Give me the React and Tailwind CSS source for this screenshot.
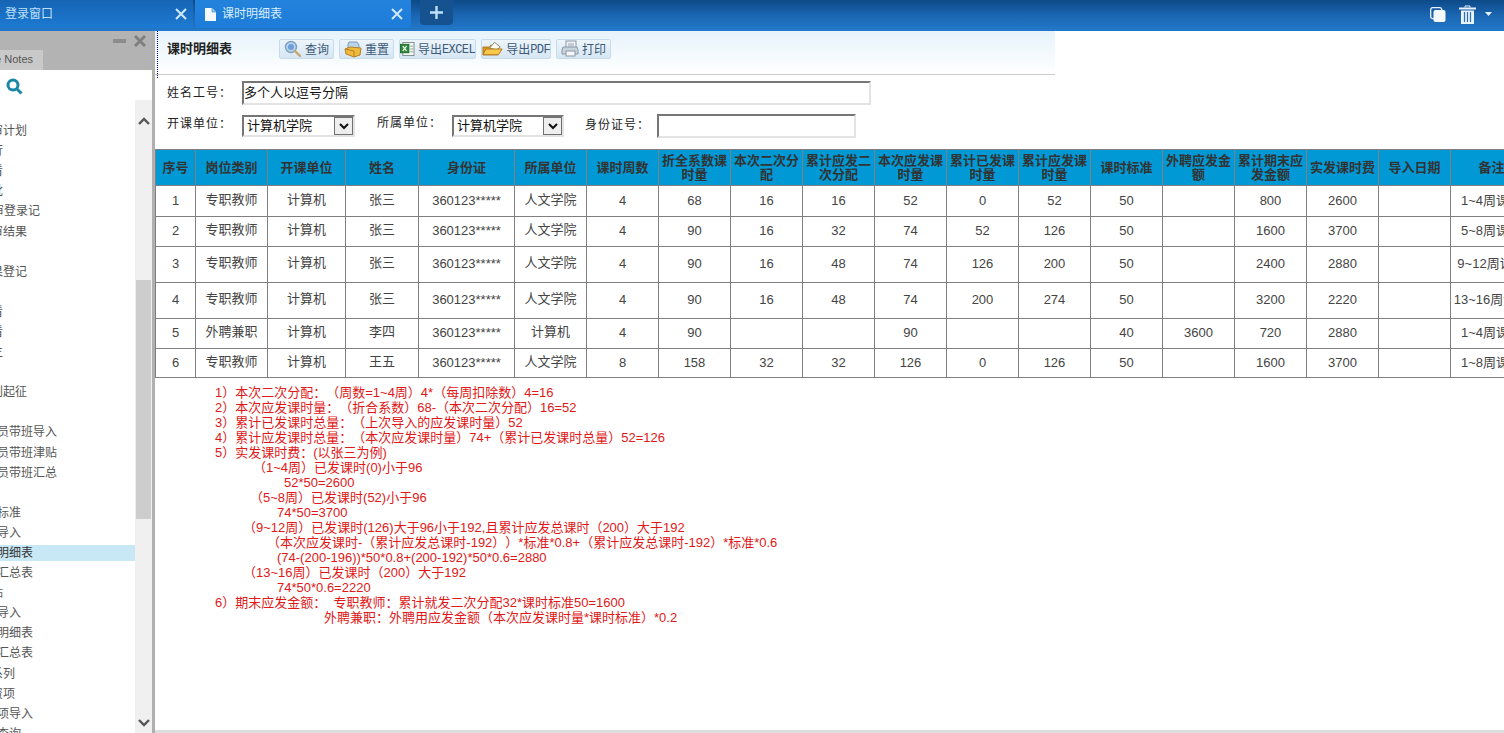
const cjk = "font-['Liberation_Sans','Noto_Sans_CJK_SC',sans-serif]"

const menu = [
  { t: '教学审计划', c: 'ml-[-33px]' },
  { t: '审批行', c: 'ml-[-33px]' },
  { t: '计划查看', c: 'ml-[-45px]' },
  { t: '审核批', c: 'ml-[-33px]' },
  { t: '教学审登录记', c: 'ml-[-32px]' },
  { t: '教学审结果', c: 'ml-[-33px]' },
  { t: '' },
  { t: '教学成果登记', c: 'ml-[-45px]' },
  { t: '' },
  { t: '成果查看', c: 'ml-[-45px]' },
  { t: '统计查看', c: 'ml-[-45px]' },
  { t: '教学主', c: 'ml-[-33px]' },
  { t: '' },
  { t: '教学计划起征', c: 'ml-[-45px]' },
  { t: '' },
  { t: '督导人员带班导入', c: 'ml-[-39px]' },
  { t: '督导人员带班津贴', c: 'ml-[-39px]' },
  { t: '督导人员带班汇总', c: 'ml-[-39px]' },
  { t: '' },
  { t: '课时费标准', c: 'ml-[-39px]' },
  { t: '课时费导入', c: 'ml-[-39px]' },
  { t: '课时费明细表', c: 'ml-[-39px]', active: true },
  { t: '课时费汇总表', c: 'ml-[-39px]' },
  { t: '补津贴', c: 'ml-[-33px]' },
  { t: '津贴费导入', c: 'ml-[-39px]' },
  { t: '津贴费明细表', c: 'ml-[-39px]' },
  { t: '津贴费汇总表', c: 'ml-[-39px]' },
  { t: '工资系列', c: 'ml-[-33px]' },
  { t: '工资项', c: 'ml-[-21px]' },
  { t: '工资项导入', c: 'ml-[-27px]' },
  { t: '工资查询', c: 'ml-[-27px]' },
]

const widths = ['w-[40px]', 'w-[72px]', 'w-[78px]', 'w-[73px]', 'w-[96px]', 'w-[72px]', 'w-[72px]', 'w-[72px]', 'w-[72px]', 'w-[72px]', 'w-[72px]', 'w-[72px]', 'w-[72px]', 'w-[72px]', 'w-[72px]', 'w-[72px]', 'w-[72px]', 'w-[72px]', 'w-[82px]']

const headers = ['序号', '岗位类别', '开课单位', '姓名', '身份证', '所属单位', '课时周数', '折全系数课时量', '本次二次分配', '累计应发二次分配', '本次应发课时量', '累计已发课时量', '累计应发课时量', '课时标准', '外聘应发金额', '累计期末应发金额', '实发课时费', '导入日期', '备注']

const rows = [
  { h: 'h-[31px]', d: ['1', '专职教师', '计算机', '张三', '360123*****', '人文学院', '4', '68', '16', '16', '52', '0', '52', '50', '', '800', '2600', '', '1~4周课时'] },
  { h: 'h-[30px]', d: ['2', '专职教师', '计算机', '张三', '360123*****', '人文学院', '4', '90', '16', '32', '74', '52', '126', '50', '', '1600', '3700', '', '5~8周课时'] },
  { h: 'h-[36px]', d: ['3', '专职教师', '计算机', '张三', '360123*****', '人文学院', '4', '90', '16', '48', '74', '126', '200', '50', '', '2400', '2880', '', '9~12周课时'] },
  { h: 'h-[36px]', d: ['4', '专职教师', '计算机', '张三', '360123*****', '人文学院', '4', '90', '16', '48', '74', '200', '274', '50', '', '3200', '2220', '', '13~16周课时'] },
  { h: 'h-[30px]', d: ['5', '外聘兼职', '计算机', '李四', '360123*****', '计算机', '4', '90', '', '', '90', '', '', '40', '3600', '720', '2880', '', '1~4周课时'] },
  { h: 'h-[29px]', d: ['6', '专职教师', '计算机', '王五', '360123*****', '人文学院', '8', '158', '32', '32', '126', '0', '126', '50', '', '1600', '3700', '', '1~8周课时'] },
]

// columns holding only chinese text sit a pixel higher in the reference
const cjkCols = [1, 2, 3, 5]

const notes = [
  { t: '1）本次二次分配：（周数=1~4周）4*（每周扣除数）4=16', c: 'pl-[60px]' },
  { t: '2）本次应发课时量：（折合系数）68-（本次二次分配）16=52', c: 'pl-[60px]' },
  { t: '3）累计已发课时总量：（上次导入的应发课时量）52', c: 'pl-[60px]' },
  { t: '4）累计应发课时总量：（本次应发课时量）74+（累计已发课时总量）52=126', c: 'pl-[60px]' },
  { t: '5）实发课时费：(以张三为例)', c: 'pl-[60px]' },
  { t: '（1~4周）已发课时(0)小于96', c: 'pl-[98px]' },
  { t: '52*50=2600', c: 'pl-[129px]' },
  { t: '（5~8周）已发课时(52)小于96', c: 'pl-[95px]' },
  { t: '74*50=3700', c: 'pl-[122px]' },
  { t: '（9~12周）已发课时(126)大于96小于192,且累计应发总课时（200）大于192', c: 'pl-[88px]' },
  { t: '（本次应发课时-（累计应发总课时-192））*标准*0.8+（累计应发总课时-192）*标准*0.6', c: 'pl-[112px]' },
  { t: '(74-(200-196))*50*0.8+(200-192)*50*0.6=2880', c: 'pl-[122px]' },
  { t: '（13~16周）已发课时（200）大于192', c: 'pl-[88px]' },
  { t: '74*50*0.6=2220', c: 'pl-[122px]' },
  { t: '6）期末应发金额：  专职教师：累计就发二次分配32*课时标准50=1600', c: 'pl-[60px]' },
  { t: '外聘兼职：外聘用应发金额（本次应发课时量*课时标准）*0.2', c: 'pl-[169px]' },
]

function CloseIcon({ className }) {
  return (
    <svg className={className} width="12" height="12" viewBox="0 0 12 12" fill="none" stroke="#cfe8fb" strokeWidth="2"><path d="M1 1l10 10M11 1L1 11" /></svg>
  )
}

function SearchBtnIcon() {
  return (
    <svg width="18" height="18" viewBox="0 0 18 18">
      <circle cx="7" cy="7" r="5.5" fill="#b8d4ee" stroke="#7f9fc0" strokeWidth="1.4" />
      <circle cx="7" cy="7" r="3" fill="#6f9fd6" />
      <path d="M11 11l5 5" stroke="#c9a56b" strokeWidth="2.4" strokeLinecap="round" />
    </svg>
  )
}

function ResetIcon() {
  return (
    <svg width="18" height="18" viewBox="0 0 18 18">
      <path d="M5 2h8l2 3v4H4V4z" fill="#b9d5ea" stroke="#7d9cb8" />
      <path d="M1 9l5-2 11 1-1 7-6 2-8-3z" fill="#f0b93a" stroke="#b5822a" />
      <path d="M1 9l9 2v6" fill="none" stroke="#b5822a" />
    </svg>
  )
}

function ExcelIcon() {
  return (
    <svg width="16" height="16" viewBox="0 0 16 16">
      <rect x="3" y="1" width="12" height="14" fill="#f4f7f4" stroke="#7d8a8f" />
      <rect x="0.5" y="3" width="9" height="9" fill="#2c8a3c" stroke="#1f6a2c" />
      <path d="M3 5l4 5M7 5l-4 5" stroke="#fff" strokeWidth="1.2" />
      <path d="M11 5h3M11 8h3M11 11h3" stroke="#7aa886" />
    </svg>
  )
}

function PdfIcon() {
  return (
    <svg width="22" height="16" viewBox="0 0 22 16">
      <path d="M1 6h7l1-2h8v10H1z" fill="#e09a22" stroke="#b0771c" />
      <path d="M8 7l5-6 6 5-4 3z" fill="#fdfdf6" stroke="#8a8f70" />
      <path d="M1 14l3-6h17l-4 6z" fill="#f6c94c" stroke="#b0771c" />
    </svg>
  )
}

function PrintIcon() {
  return (
    <svg width="18" height="17" viewBox="0 0 18 17">
      <rect x="5" y="1" width="10" height="7" fill="#f0f3f6" stroke="#8b98a6" />
      <path d="M2 7h14l1 3v4H1v-4z" fill="#c9d3dd" stroke="#8b98a6" />
      <rect x="5" y="11" width="9" height="5" fill="#f5f7f9" stroke="#8b98a6" />
      <path d="M7 4h6M7 6h6" stroke="#9aa6b2" />
    </svg>
  )
}

function ToolBtn({ w, icon, children }) {
  return (
    <button className={`${w} h-[20px] flex items-center justify-center gap-[3px] rounded-[2px] border border-[#c8dbea] bg-gradient-to-b from-[#edf5fb] to-[#d6e6f3] text-[12px] text-[#3d5a78] shrink-0`}>
      {icon}
      <span className="flex items-center whitespace-nowrap pt-[3px]">{children}</span>
    </button>
  )
}

function FakeSelect({ w }) {
  return (
    <div className={`${w} h-[22px] flex items-center justify-between border-2 border-t-[#767676] border-l-[#767676] border-r-[#e3e3e3] border-b-[#e3e3e3] bg-white pl-[3px] text-[13px] text-[#111] shrink-0`}>
      <span>计算机学院</span>
      <span className="w-[19px] h-[18px] flex items-center justify-center bg-[#eeeeee] border border-[#707070]">
        <svg width="10" height="7" viewBox="0 0 10 7" fill="none" stroke="#111" strokeWidth="2"><path d="M1 1l4 4 4-4" /></svg>
      </span>
    </div>
  )
}

export default function App() {
  return (
    <div className={`w-[1504px] h-[733px] overflow-hidden flex flex-col bg-white ${cjk}`}>
      {/* top tabs */}
      <div className="h-[31px] shrink-0 flex bg-gradient-to-b from-[#0d4a88] via-[#1b66b2] to-[#2279ca]">
        <div className="w-[193px] h-[28px] flex items-center justify-between pl-[5px] pr-[6px] rounded-br-[4px] bg-gradient-to-b from-[#1664b4] to-[#1d7ad2] text-[12px] text-[#bfe0f8]">
          <span>登录窗口</span>
          <CloseIcon />
        </div>
        <div className="ml-[2px] w-[216px] h-[28px] flex items-center pl-[10px] pr-[8px] rounded-b-[4px] bg-gradient-to-b from-[#2282dc] to-[#1d7cd8] text-[12px] text-[#d8eefc]">
          <svg width="11" height="13" viewBox="0 0 11 13" className="mr-[6px]"><path d="M0 0h7l4 4v9H0z" fill="#f4f8fb" /><path d="M7 0v4h4" fill="#9cc" stroke="#1d7cd8" strokeWidth="0.6" /></svg>
          <span className="flex-1">课时明细表</span>
          <CloseIcon />
        </div>
        <div className="ml-[9px] w-[33px] h-[25px] flex items-center justify-center rounded-b-[4px] bg-[#15528f]">
          <svg width="13" height="13" viewBox="0 0 13 13" stroke="#bfe0f8" strokeWidth="2.4"><path d="M6.5 0v13M0 6.500h13" /></svg>
        </div>
        <div className="ml-auto flex items-center h-[28px] pr-[12px]">
          <svg width="16" height="15" viewBox="0 0 16 15"><rect x="0.700" y="0.700" width="11" height="11" rx="2" fill="none" stroke="#e8f2fa" strokeWidth="1.3" /><rect x="3.500" y="3" width="12" height="12" rx="2" fill="#f4f8fb" /></svg>
          <svg className="ml-[13px]" width="17" height="19" viewBox="0 0 17 19">
            <path d="M0 2.500h17v2H0z" fill="#e8f2fa" />
            <path d="M6 2.500V1h5v1.500" stroke="#e8f2fa" fill="none" />
            <path d="M2 5.500h13V19H2z" fill="#e8f2fa" />
            <path d="M5.500 7v10M8.500 7v10M11.500 7v10" stroke="#2a70b4" strokeWidth="1.200" />
          </svg>
          <svg className="ml-[9px]" width="7" height="4" viewBox="0 0 7 4"><path d="M0 0h7L3.500 4z" fill="#e8f2fa" /></svg>
        </div>
      </div>

      <div className="flex-1 flex min-h-0">
        {/* left menu */}
        <aside className="w-[155px] shrink-0 flex flex-col bg-white border-r-[3px] border-r-[#b0b0b0]">
          <div className="h-[39px] shrink-0 flex flex-col bg-[#b3b3b3]">
            <div className="h-[19px] flex items-center justify-end gap-[8px] pr-[6px]">
              <span className="w-[13px] h-[4px] bg-[#8c8c8c]" />
              <svg width="12" height="12" viewBox="0 0 12 12" fill="none" stroke="#808080" strokeWidth="3"><path d="M1 1l10 10M11 1L1 11" /></svg>
            </div>
            <div className="w-[43px] h-[20px] overflow-hidden flex justify-end items-center bg-[#c9c9c9] pr-[10px] pb-[2px] whitespace-nowrap">
              <span className="text-[11px] text-[#555]">Release Notes</span>
            </div>
          </div>
          <div className="h-[30px] shrink-0 flex items-center pl-[6px] pt-[2px]">
            <svg width="17" height="17" viewBox="0 0 17 17" fill="none" stroke="#1a87a8" strokeWidth="3"><circle cx="7" cy="7" r="5" /><path d="M10.500 10.500l5 5" /></svg>
          </div>
          <div className="flex-1 flex min-h-0">
            <ul className="w-[135px] shrink-0 overflow-hidden pt-[21px] text-[12px] text-[#555]">
              {menu.map((m, i) => (
                <li key={i} className="h-[20.100px] flex items-center">
                  <div className={`w-full h-[16px] flex items-center ${m.active ? 'bg-[#c9e8f5] text-[#333]' : ''}`}>
                    <span className={`whitespace-nowrap ${m.c || ''}`}>{m.t}</span>
                  </div>
                </li>
              ))}
            </ul>
            <div className="w-[17px] shrink-0 flex flex-col items-center bg-[#f0f0f0]">
              <div className="h-[180px] w-full shrink-0 pt-[17px] flex justify-center">
                <svg width="12" height="8" viewBox="0 0 12 8" fill="none" stroke="#555" strokeWidth="2.400"><path d="M1 7l5-5 5 5" /></svg>
              </div>
              <div className="h-[239px] w-[15px] shrink-0 bg-[#cdcdcd]" />
              <div className="flex-1 w-full flex items-end justify-center pb-[6px]">
                <svg width="12" height="8" viewBox="0 0 12 8" fill="none" stroke="#555" strokeWidth="2.400"><path d="M1 1l5 5 5-5" /></svg>
              </div>
            </div>
          </div>
        </aside>

        {/* main */}
        <main className="relative flex-1 min-w-0 flex flex-col">
          <span className="absolute left-[2px] top-0 h-[47px] border-l border-dotted border-l-[#000080]" />
          <div className="flex-1 min-h-0 overflow-hidden">
            <div className="w-[900px] h-[44px] flex items-center pl-[12px] pb-[8px] border-b border-b-[#cccccc] bg-gradient-to-b from-[#e6f3fb] to-white">
              <b className="w-[112px] shrink-0 text-[13px] text-[#222]">课时明细表</b>
              <div className="flex gap-[5px]">
                <ToolBtn w="w-[55px]" icon={<SearchBtnIcon />}>查询</ToolBtn>
                <ToolBtn w="w-[55px]" icon={<ResetIcon />}>重置</ToolBtn>
                <ToolBtn w="w-[77px]" icon={<ExcelIcon />}>导出<span className="font-['Liberation_Mono',monospace] text-[12px] tracking-[-0.6px]">EXCEL</span></ToolBtn>
                <ToolBtn w="w-[70px]" icon={<PdfIcon />}>导出<span className="font-['Liberation_Mono',monospace] text-[12px] tracking-[-0.6px]">PDF</span></ToolBtn>
                <ToolBtn w="w-[55px]" icon={<PrintIcon />}>打印</ToolBtn>
              </div>
            </div>

            <div className="flex items-center h-[24px] mt-[6px] pl-[12px] text-[12px] text-[#222]">
              <span className="w-[75px] shrink-0 tracking-[1px]">姓名工号：</span>
              <input readOnly value="多个人以逗号分隔" className="w-[629px] h-[24px] border-2 border-t-[#767676] border-l-[#767676] border-r-[#e3e3e3] border-b-[#e3e3e3] px-0 pb-[4px] text-[13px] text-[#111] outline-none" />
            </div>

            <div className="flex items-center h-[24px] mt-[9px] pl-[12px] text-[12px] text-[#222]">
              <span className="w-[75px] shrink-0 pb-[4px] tracking-[1px]">开课单位：</span>
              <FakeSelect w="w-[113px]" />
              <span className="ml-[22px] w-[75px] shrink-0 pb-[6px] tracking-[1px]">所属单位：</span>
              <FakeSelect w="w-[112px]" />
              <span className="ml-[21px] w-[72px] shrink-0 pb-[2px] tracking-[1px]">身份证号：</span>
              <input readOnly className="w-[199px] h-[24px] border-2 border-t-[#767676] border-l-[#767676] border-r-[#e3e3e3] border-b-[#e3e3e3] outline-none" />
            </div>

            <table className="mt-[11px] w-[1378px] table-fixed border-collapse text-[13px] text-[#444]">
              <colgroup>
                {widths.map((w, i) => <col key={i} className={w} />)}
              </colgroup>
              <thead>
                <tr className="h-[36px] bg-[#0099d5]">
                  {headers.map((h) => (
                    <th key={h} className="border border-[#808080] p-0 align-middle text-center text-[13px] leading-[14px] font-bold text-[#333]">{h}</th>
                  ))}
                </tr>
              </thead>
              <tbody>
                {rows.map((r, i) => (
                  <tr key={i} className={r.h}>
                    {r.d.map((c, j) => (
                      <td key={j} className={`border border-[#808080] p-0 align-middle text-center whitespace-nowrap overflow-hidden ${cjkCols.includes(j) ? 'pb-[3px]' : 'pb-[1px]'}`}>{c}</td>
                    ))}
                  </tr>
                ))}
              </tbody>
            </table>

            <div className="mt-[7px] text-[13px] leading-[15px] text-[#e01818] [text-spacing-trim:space-all]">
              {notes.map((n) => (
                <p key={n.t} className={`h-[15px] whitespace-pre ${n.c}`}>{n.t}</p>
              ))}
            </div>
          </div>
          <div className="h-[3px] shrink-0 bg-[#dddddd]" />
        </main>
      </div>
    </div>
  )
}
